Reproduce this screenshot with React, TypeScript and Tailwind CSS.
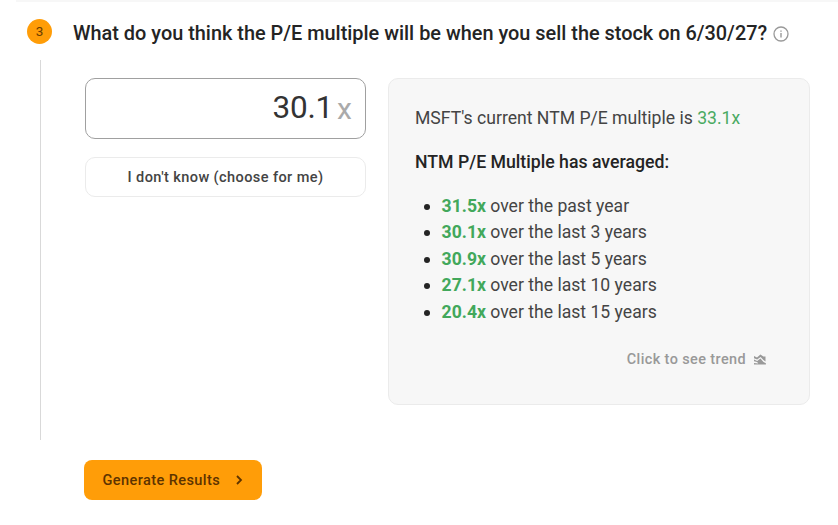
import { ReactNode } from 'react'

const AVERAGES = [
  { multiple: '31.5x', period: 'past year' },
  { multiple: '30.1x', period: 'last 3 years' },
  { multiple: '30.9x', period: 'last 5 years' },
  { multiple: '27.1x', period: 'last 10 years' },
  { multiple: '20.4x', period: 'last 15 years' },
]

// ── Icons ─────────────────────────────────────────────────────────────────────
function InfoIcon() {
  return (
    <svg className="ml-[6px] mt-[5px] size-4 text-[#999]" viewBox="0 0 16 16" fill="none" stroke="currentColor">
      <circle cx="8" cy="8" r="7" strokeWidth="1.3" />
      <path d="M8 7v4.5M8 4.4v1.4" strokeWidth="1.4" />
    </svg>
  )
}

function TrendIcon() {
  return (
    <svg className="mb-px ml-2 h-[11px] w-3" viewBox="0 0 12 11" fill="currentColor">
      <path d="M0 2 3 3.4 6.4.5l3 2.1h2.1v5L9.4 6 6.6 2.9 3.2 5.6 0 4.2z" />
      <path d="m0 5.6 3.2 1.5 3.2-2.6 3.1 3.4 2.4 1.4v1.3H0V9l4.3.4L3.1 8 0 7.2z" />
    </svg>
  )
}

function ChevronIcon() {
  return (
    <svg className="mb-[2px] mr-[19px] h-[10px] w-[7px]" viewBox="0 0 7 10" fill="none" stroke="currentColor" strokeWidth="1.8">
      <path d="m1 1 4 4-4 4" />
    </svg>
  )
}

// ── Step header ───────────────────────────────────────────────────────────────
function StepHeader({ step, children }: { step: number; children: ReactNode }) {
  return (
    <div className="ml-[27px] flex h-[58px] items-center">
      <span className="flex size-[25px] shrink-0 items-center justify-center rounded-full bg-[#ff9d08] pt-px text-[13.5px] text-[#6b3c00]">
        {step}
      </span>
      <h2 className="ml-[21px] mt-[5px] whitespace-nowrap text-[19.9px] font-medium text-[#242424]">{children}</h2>
      <InfoIcon />
    </div>
  )
}

// ── Historical multiples ──────────────────────────────────────────────────────
function MultiplePanel() {
  return (
    <section className="ml-[22px] flex h-[327px] w-[422px] flex-col rounded-[10px] border border-[#ebebeb] bg-[#f7f7f7] px-[26px] pt-[26px] text-[17.6px] leading-[26.5px] text-[#444]">
      <p>
        MSFT's current NTM P/E multiple is <span className="text-[#4aaa62]">33.1x</span>
      </p>
      <p className="mt-[17px] text-[17.7px] font-medium text-[#242424]">NTM P/E Multiple has averaged:</p>
      <ul className="mt-[17.5px]">
        {AVERAGES.map(({ multiple, period }) => (
          <li key={period} className="flex items-center">
            <span className="ml-[9px] mr-[11.6px] mt-[2px] size-[6px] rounded-full bg-[#242424]" />
            <span>
              <b className="font-bold text-[#42a85b]">{multiple}</b> over the {period}
            </span>
          </li>
        ))}
      </ul>
      <button className="mr-[17px] mt-[21.5px] flex items-center self-end text-[14.45px] font-medium leading-[26px] tracking-[0.4px] text-[#999]">
        Click to see trend
        <TrendIcon />
      </button>
    </section>
  )
}

export default function App() {
  return (
    <main className="h-[525px] w-[838px] overflow-hidden bg-white font-[Roboto,sans-serif]">
      <div className="ml-4 h-[2px] bg-[#f7f7f7]" />
      <StepHeader step={3}>What do you think the P/E multiple will be when you sell the stock on 6/30/27?</StepHeader>
      <div className="ml-10 flex h-[380px] border-l border-[#d9d9d9] pt-[18px]">
        <div className="ml-[44px] w-[281px]">
          <label className="flex h-[61px] items-center rounded-[10px] border border-[#a0a0a0] pr-[13px]">
            <input
              defaultValue="30.1"
              className="mb-px w-full min-w-0 bg-transparent text-right text-[31.5px] tracking-[-0.2px] text-[#333] outline-none"
            />
            <span className="ml-[4px] text-[30px] text-[#aaa]">x</span>
          </label>
          <button className="mt-[18px] h-10 w-full rounded-[10px] border border-[#ebebeb] pt-[2px] text-[14.55px] font-medium tracking-[0.4px] text-[#444]">
            I don't know (choose for me)
          </button>
        </div>
        <MultiplePanel />
      </div>
      <button className="ml-[84px] mt-5 flex h-10 w-[178px] items-center justify-between rounded-lg bg-[#ff9d08] pl-[18.5px] pt-px text-[14.55px] font-medium tracking-[0.4px] text-[#5d3300]">
        Generate Results
        <ChevronIcon />
      </button>
    </main>
  )
}
